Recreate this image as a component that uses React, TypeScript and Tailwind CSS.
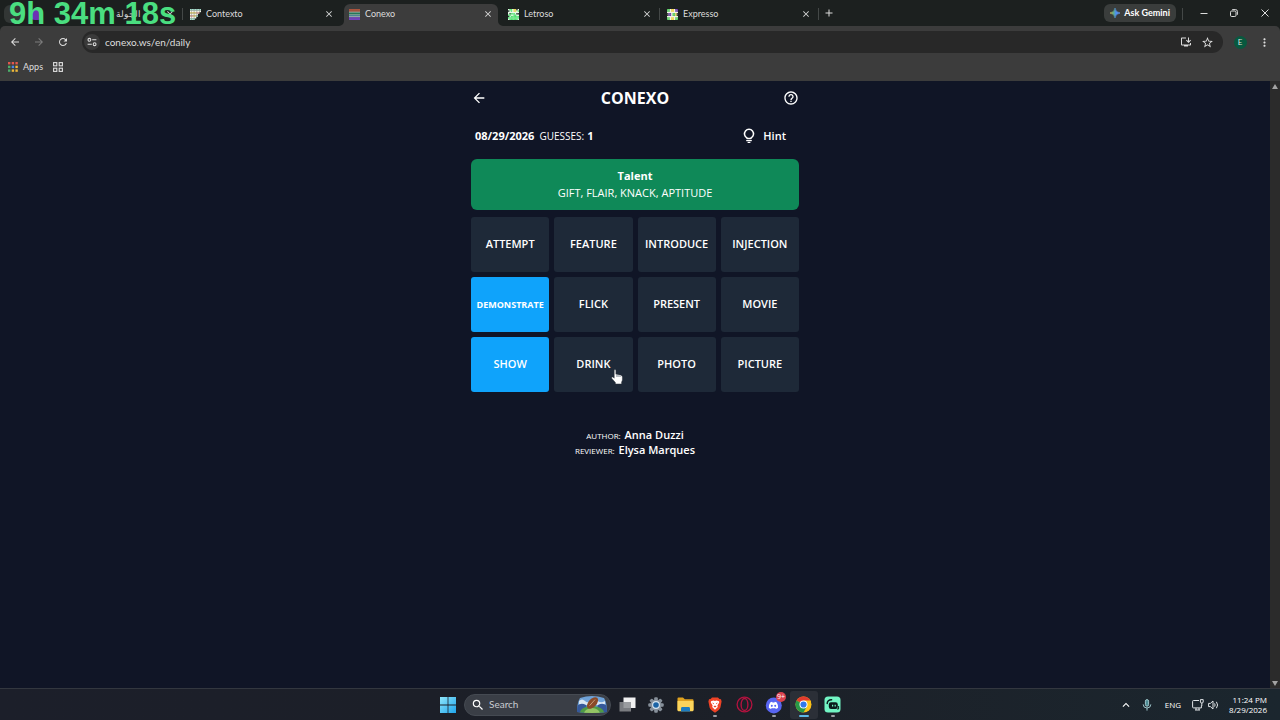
import React from 'react';
import clsx from 'clsx';
import {
  MdAdd,
  MdArrowBack,
  MdArrowForward,
  MdClose,
  MdHelpOutline,
  MdInstallDesktop,
  MdKeyboardArrowUp,
  MdMoreVert,
  MdRefresh,
  MdSearch,
  MdStarBorder,
} from 'react-icons/md';

/* ---------- favicons ---------- */

const PixelIcon: React.FC<{ rows: string[]; colors: Record<string, string>; bg?: string }> = ({ rows, colors, bg }) => (
  <svg width="11" height="11" viewBox={`0 0 ${rows[0].length} ${rows.length}`} preserveAspectRatio="none" className="shrink-0">
    {bg && <rect width="100%" height="100%" fill={bg} />}
    {rows.map((row, y) =>
      row.split('').map((c, x) =>
        colors[c] ? <rect key={`${x}-${y}`} x={x} y={y} width="1.02" height="1.02" fill={colors[c]} /> : null
      )
    )}
  </svg>
);

const ContextoIcon = () => (
  <PixelIcon
    rows={['ggggggg', 'wwwwwww', 'yyyypp.', 'wwwww..', 'ppyyg..', 'wwww...', 'ggg....']}
    colors={{ g: '#a9dfcf', w: '#f4f4ea', y: '#f3e08c', p: '#f1b7b0' }}
  />
);

const ConexoIcon = () => (
  <PixelIcon
    rows={['r', 'r', 'r', 'd', 'g', 'g', 'd', 'b', 'd', 'p', 'p', 'p']}
    colors={{ r: '#b4563f', d: '#b9cfc6', g: '#1f8a62', b: '#3489a8', p: '#7645c6' }}
  />
);

const LetrosoIcon = () => (
  <PixelIcon
    bg="#e9f9ea"
    rows={['wggwyykw', 'kwgwyywg', 'wwwwwwww', 'wkgggwkk', 'ggwwggww', 'kwgggggg', 'gggggggg', 'wggggggw']}
    colors={{ g: '#4fe070', k: '#20302a', y: '#e7d24d' }}
  />
);

const ExpressoIcon = () => (
  <PixelIcon
    bg="#f5f3e6"
    rows={['ggwyywpp', 'ggwyywpp', 'wwwwwwww', 'kppwggyk', 'kppwggyk', 'wwwwwwww', 'ggwyywgg', 'ggwyywgg']}
    colors={{ g: '#49c456', y: '#efcf3c', p: '#5b2ca0', k: '#26302c' }}
  />
);

/* ---------- browser window ---------- */

const tabs = [
  { title: 'الجولة', icon: <span className="size-[11px] shrink-0 rounded-sm bg-[#6d2fb5]" /> },
  { title: 'Contexto', icon: <ContextoIcon /> },
  { title: 'Conexo', icon: <ConexoIcon />, active: true },
  { title: 'Letroso', icon: <LetrosoIcon /> },
  { title: 'Expresso', icon: <ExpressoIcon /> },
];

const TabFlare: React.FC<{ className: string }> = ({ className }) => (
  <svg width="5" height="5" viewBox="0 0 5 5" className={clsx('absolute bottom-0', className)}>
    <path d="M5 0V5H0A5 5 0 0 0 5 0Z" fill="#3c3c3c" />
  </svg>
);

const TabStrip = () => (
  <div className="flex h-[26px] bg-[#1c201f] text-[#dcdcdc]">
    <button aria-label="Search tabs" className="mt-[5px] ml-1 mr-[3px] h-[18px] w-[18px] rounded-md bg-[#323635]" />
    {tabs.map((tab, i) => {
      const first = i === 0;
      const separated = first || i === 3 || i === 4;

      return (
        <div key={tab.title} className="relative w-[159px] pt-1 pl-px pr-1">
          <div className={clsx('relative flex h-[22px] items-center pr-[5px] pl-[5px]', tab.active && 'rounded-t-md bg-[#3c3c3c]')}>
            {tab.active && (
              <>
                <TabFlare className="-left-[5px]" />
                <TabFlare className="-right-[5px] -scale-x-100" />
              </>
            )}
            <button className={clsx('-mt-0.5 flex grow items-center gap-[5px] text-[9px]', first && 'pr-6')}>
              {tab.icon}
              <span className={clsx(first && 'grow text-right')}>{tab.title}</span>
            </button>
            <button aria-label={`Close ${tab.title}`} className="-mt-0.5">
              <MdClose size={10} />
            </button>
          </div>
          {separated && <span className="absolute top-2 right-px h-3 w-px bg-[#444847]" />}
        </div>
      );
    })}
    <button aria-label="New tab" className="ml-[3px] flex h-[26px] items-center">
      <MdAdd size={12} />
    </button>

    <button className="mt-1 ml-auto flex h-[18px] items-center gap-1 rounded-md bg-[#3a3d3c] px-[6px] text-[9px] font-bold text-white">
      <svg width="10" height="10" viewBox="0 0 10 10">
        <defs>
          <linearGradient id="gemini" x1="0" y1="0" x2="1" y2="0">
            <stop offset="0" stopColor="#e8c04b" />
            <stop offset="0.35" stopColor="#5fae8a" />
            <stop offset="0.6" stopColor="#4a8df6" />
            <stop offset="1" stopColor="#6fa6ff" />
          </linearGradient>
        </defs>
        <path d="M5 0Q5.6 4.4 10 5Q5.6 5.6 5 10Q4.4 5.6 0 5Q4.4 4.4 5 0Z" fill="url(#gemini)" stroke="url(#gemini)" strokeWidth="0.6" />
      </svg>
      Ask Gemini
    </button>
    <span className="mt-2 ml-[6px] h-3 w-px bg-[#444847]" />
    <div className="ml-[5px] flex">
      <button aria-label="Minimize" className="flex w-[31px] items-center justify-center">
        <svg width="8" height="8" viewBox="0 0 8 8" stroke="#dcdcdc"><path d="M0.5 4.5H7.5" /></svg>
      </button>
      <button aria-label="Restore" className="flex w-[30px] items-center justify-center">
        <svg width="8" height="8" viewBox="0 0 8 8" fill="none" stroke="#dcdcdc">
          <rect x="0.5" y="2" width="5.5" height="5.5" rx="1.2" />
          <path d="M2.2 0.6H5.6Q7.4 0.6 7.4 2.4V5.8" />
        </svg>
      </button>
      <button aria-label="Close" className="flex w-[31px] items-center justify-center">
        <svg width="8" height="8" viewBox="0 0 8 8" stroke="#dcdcdc"><path d="M0.5 0.5L7.5 7.5M7.5 0.5L0.5 7.5" /></svg>
      </button>
    </div>
  </div>
);

const ToolButton: React.FC<{ label: string; children: React.ReactNode; className?: string }> = ({ label, children, className }) => (
  <button aria-label={label} className={clsx('flex h-6 w-6 items-center justify-center', className)}>
    {children}
  </button>
);

const Toolbar = () => (
  <div className="flex h-8 items-center bg-[#3c3c3c] pr-1 pl-[3px] text-[#dedede]">
    <ToolButton label="Back"><MdArrowBack size={12} /></ToolButton>
    <ToolButton label="Forward" className="text-[#7c7c7c]"><MdArrowForward size={12} /></ToolButton>
    <ToolButton label="Reload"><MdRefresh size={12} /></ToolButton>
    <div className="mr-[5px] ml-[7px] flex h-[22px] grow items-center rounded-full bg-[#282828] pr-2 pl-[2px]">
      <button aria-label="Site information" className="flex size-4 items-center justify-center rounded-full bg-[#3a3a3a]">
        <svg width="10" height="10" viewBox="0 0 10 10" fill="none" stroke="#dedede" strokeWidth="1.1">
          <circle cx="2.4" cy="2.8" r="1.4" />
          <path d="M5.2 2.8H9.4M0.6 7.2H4.8" />
          <circle cx="7.6" cy="7.2" r="1.4" />
        </svg>
      </button>
      <input
        aria-label="Address"
        defaultValue="conexo.ws/en/daily"
        className="ml-[5px] min-w-0 grow bg-transparent text-[10px] text-[#dedede] outline-none"
      />
      <div className="flex gap-[5px]">
        <button aria-label="Install app" className="flex size-4 items-center justify-center"><MdInstallDesktop size={12} /></button>
        <button aria-label="Bookmark" className="flex size-4 items-center justify-center"><MdStarBorder size={13} /></button>
      </div>
    </div>
    <ToolButton label="Profile">
      <span className="flex size-[13px] items-center justify-center rounded-full bg-[#08593f] text-[8px] leading-none">E</span>
    </ToolButton>
    <ToolButton label="Menu"><MdMoreVert size={13} /></ToolButton>
  </div>
);

const appColors = ['#e2574c', '#e2574c', '#e2574c', '#4caf6a', '#4a86e8', '#f0b93a', '#4caf6a', '#f0b93a', '#f0b93a'];

const BookmarkBar = () => (
  <div className="flex h-[23px] items-center gap-[10px] bg-[#3c3c3c] px-2 pb-[6px] text-[9px] text-[#dedede]">
    <a href="#apps" className="flex items-center gap-[5px]">
      <svg width="10" height="10" viewBox="0 0 10 10">
        {appColors.map((c, i) => (
          <rect key={i} x={(i % 3) * 3.7} y={Math.floor(i / 3) * 3.7} width="2.4" height="2.4" fill={c} />
        ))}
      </svg>
      Apps
    </a>
    <button aria-label="Tab groups">
      <svg width="10" height="10" viewBox="0 0 10 10" fill="none" stroke="#dedede" strokeWidth="1.1">
        <rect x="0.6" y="0.6" width="3.2" height="3.2" />
        <rect x="6.2" y="0.6" width="3.2" height="3.2" />
        <rect x="0.6" y="6.2" width="3.2" height="3.2" />
        <rect x="6.2" y="6.2" width="3.2" height="3.2" />
      </svg>
    </button>
  </div>
);

/* ---------- game ---------- */

const words = [
  'ATTEMPT', 'FEATURE', 'INTRODUCE', 'INJECTION',
  'DEMONSTRATE', 'FLICK', 'PRESENT', 'MOVIE',
  'SHOW', 'DRINK', 'PHOTO', 'PICTURE',
];
const selected = ['DEMONSTRATE', 'SHOW'];
const hovered = 'DRINK';

const HandCursor = () => (
  <svg width="12" height="16" viewBox="0 0 12 16" className="pointer-events-none absolute top-8 left-[57px]">
    <path
      d="M3.2 1.4Q3.2 0.5 4 0.5T4.9 1.4V5.2L10 6.2Q11.4 6.6 11.4 8V10.6Q11.4 12 10.6 13V15H4.4V13.6L0.8 9.4Q0.3 8.4 1.2 8Q1.9 7.8 2.5 8.5L3.2 9.2Z"
      fill="#fff"
      stroke="#2b3038"
      strokeWidth="0.5"
    />
    <path d="M5 5.4L10 6.4V8H5Z" fill="#b9bec4" />
  </svg>
);

const Game = () => (
  <main className="mx-auto w-[328px] text-white">
    <header className="flex h-[34px] items-center justify-between">
      <button aria-label="Back to home"><MdArrowBack size={16} /></button>
      <h1 className="text-[16px] font-bold">CONEXO</h1>
      <button aria-label="How to play"><MdHelpOutline size={16} /></button>
    </header>

    <div className="mt-[6px] flex h-[30px] items-center pr-[13px] pl-1 text-[11px]">
      <span className="font-bold">08/29/2026</span>
      <span className="ml-[5px] text-[10px]">GUESSES:</span>
      <span className="ml-[3px] font-bold">1</span>
      <button className="ml-auto flex items-center gap-[7px] font-semibold">
        <svg width="14" height="16" viewBox="0 0 14 16" fill="none" stroke="#fff" strokeWidth="1.5">
          <path d="M5 10.6V9.9A4.5 4.5 0 1 1 9 9.9V10.6Z" strokeLinejoin="round" />
          <path d="M4.2 12.6H9.8" strokeWidth="1.2" />
          <path d="M5.6 14.4H8.4" strokeWidth="1.2" />
        </svg>
        Hint
      </button>
    </div>

    <section className="mt-2 rounded-md bg-[#0f8958] pt-2 pb-[9px] text-center text-[11px] leading-[17px]">
      <h2 className="font-bold">Talent</h2>
      <p>GIFT, FLAIR, KNACK, APTITUDE</p>
    </section>

    <div className="mt-[7px] grid grid-cols-4 gap-[5px]">
      {words.map((word) => (
        <button
          key={word}
          aria-pressed={selected.includes(word)}
          className={clsx(
            'relative h-[55px] rounded-[3px]',
            selected.includes(word) ? 'bg-[#0fa3fb]' : 'bg-[#1e2938]',
            word.length > 10 ? 'text-[9px] font-bold' : 'text-[11px] font-semibold'
          )}
        >
          {word}
          {word === hovered && <HandCursor />}
        </button>
      ))}
    </div>

    <footer className="mt-[35px] text-center text-[11px] leading-[15px] font-semibold">
      <p><span className="mr-px text-[8px] leading-none font-medium">AUTHOR:</span> Anna Duzzi</p>
      <p><span className="mr-px text-[8px] leading-none font-medium">REVIEWER:</span> Elysa Marques</p>
    </footer>
  </main>
);

const ScrollBar = () => (
  <div className="flex w-[10px] flex-col items-center justify-between bg-[#2b2b2b] pt-[3px] pb-[2px]">
    <svg width="6" height="5" viewBox="0 0 6 5"><path d="M3 0L6 5H0Z" fill="#a3a3a3" /></svg>
    <svg width="6" height="5" viewBox="0 0 6 5"><path d="M3 5L6 0H0Z" fill="#a3a3a3" /></svg>
  </div>
);

/* ---------- taskbar ---------- */

const TaskViewIcon = () => (
  <svg width="17" height="15" viewBox="0 0 17 15">
    <rect x="4.5" y="0.5" width="12" height="10.5" fill="#f1f1f1" />
    <rect x="0.5" y="5" width="11.5" height="9.5" fill="#8b8d90" fillOpacity="0.85" />
  </svg>
);

const SettingsIcon = () => (
  <svg width="16" height="16" viewBox="0 0 16 16">
    {[0, 45, 90, 135].map((a) => (
      <rect key={a} x="6.2" y="0.3" width="3.6" height="15.4" rx="1" fill="#87909a" transform={`rotate(${a} 8 8)`} />
    ))}
    <circle cx="8" cy="8" r="5.6" fill="#87909a" />
    <circle cx="8" cy="8" r="3.9" fill="#d7e6f2" />
    <circle cx="8" cy="8" r="2.8" fill="#1b63a5" />
  </svg>
);

const FolderIcon = () => (
  <svg width="17" height="15" viewBox="0 0 17 15">
    <path d="M0.5 1.5Q0.5 0.5 1.5 0.5H6L7.8 2.3H15.5Q16.5 2.3 16.5 3.3V13H0.5Z" fill="#e0a21f" />
    <path d="M0.5 4H16.5V13.3Q16.5 14.3 15.5 14.3H1.5Q0.5 14.3 0.5 13.3Z" fill="#fbd45c" />
    <path d="M4 14.5V11.4Q4 10 5.4 10H11.6Q13 10 13 11.4V14.5Z" fill="#1d7cc0" />
  </svg>
);

const BraveIcon = () => (
  <svg width="14" height="16" viewBox="0 0 14 16">
    <path d="M4 0.5H10L11.4 2L13 2.2L13.6 4.6L12.4 10.6Q12 12 10.8 12.9L7 15.7L3.2 12.9Q2 12 1.6 10.6L0.4 4.6L1 2.2L2.6 2Z" fill="#ee4326" />
    <path d="M3 4.2L5.6 3.6L7 4L8.4 3.6L11 4.2L11.2 5.6L9.4 8.4L9.8 10L7 12.8L4.2 10L4.6 8.4L2.8 5.6Z" fill="#fff" />
    <path d="M4 5.6L6 6.2L5.6 7.2ZM10 5.6L8 6.2L8.4 7.2ZM5.4 9.4L7 8.6L8.6 9.4L7 10.4Z" fill="#ee4326" />
  </svg>
);

const OperaIcon = () => (
  <svg width="17" height="17" viewBox="0 0 17 17" fill="none" stroke="#b3123f">
    <circle cx="8.5" cy="8.5" r="7.4" strokeWidth="1.3" />
    <ellipse cx="8.5" cy="8.5" rx="3.4" ry="6" strokeWidth="1.4" />
  </svg>
);

const DiscordIcon = () => (
  <svg width="18" height="18" viewBox="0 0 18 18" className="overflow-visible">
    <circle cx="8.8" cy="9.4" r="8" fill="#5865f2" />
    <path
      d="M5.2 6.4Q6.2 5.9 7.1 5.8L7.5 6.5H9.4L9.8 5.8Q10.8 5.9 11.7 6.4Q13.3 8.8 13.1 11.7Q12.1 12.6 10.8 12.9L10.2 12Q8.5 12.5 6.7 12L6.1 12.9Q4.8 12.6 3.8 11.7Q3.6 8.8 5.2 6.4Z"
      fill="#fff"
    />
    <ellipse cx="6.8" cy="9.8" rx="1" ry="1.1" fill="#5865f2" />
    <ellipse cx="10.2" cy="9.8" rx="1" ry="1.1" fill="#5865f2" />
  </svg>
);

const ChromeIcon = () => (
  <svg width="17" height="17" viewBox="0 0 17 17">
    <circle cx="8.5" cy="8.5" r="8" fill="#fbc116" />
    <path d="M8.5 8.5L1.57 4.5A8 8 0 0 1 15.43 4.5Z" fill="#e33b2e" />
    <path d="M8.5 4.5H15.4Q16 5 16 6H8.5Z" fill="#fbc116" />
    <path d="M1.57 4.5A8 8 0 0 0 8.5 16.5L11.9 10.6L8.5 8.5Z" fill="#279847" />
    <circle cx="8.5" cy="8.5" r="4" fill="#fff" />
    <circle cx="8.5" cy="8.5" r="3.1" fill="#2f78ea" />
  </svg>
);

const StreamlabsIcon = () => (
  <svg width="17" height="17" viewBox="0 0 17 17" fill="none">
    <rect x="0.5" y="0.5" width="16" height="16" rx="3.5" fill="#72f5c4" />
    <path d="M3.2 7.6Q3.2 3.8 7.6 3.8" stroke="#0b1b1c" strokeWidth="1.5" strokeLinecap="round" />
    <rect x="4.8" y="6.2" width="9" height="6.8" rx="2.2" fill="#0b1b1c" />
    <path d="M8.6 8.8V10.4M11.2 8.8V10.4" stroke="#72f5c4" strokeWidth="1.2" />
    <path d="M13 13H14.6V10" stroke="#0b1b1c" />
  </svg>
);

const apps = [
  { name: 'Task view', icon: <TaskViewIcon /> },
  { name: 'Settings', icon: <SettingsIcon /> },
  { name: 'File Explorer', icon: <FolderIcon /> },
  { name: 'Brave', icon: <BraveIcon />, running: true },
  { name: 'Opera GX', icon: <OperaIcon /> },
  { name: 'Discord', icon: <DiscordIcon />, running: true, badge: '9+' },
  { name: 'Chrome', icon: <ChromeIcon />, running: true, focused: true },
  { name: 'Streamlabs', icon: <StreamlabsIcon />, running: true },
];

const SearchPicture = () => (
  <svg width="30" height="17" viewBox="0 0 30 17" className="shrink-0">
    <clipPath id="hill"><path d="M3 2Q15 -2 27 2Q30 7 30 16Q15 18 0 16Q0 7 3 2Z" /></clipPath>
    <g clipPath="url(#hill)">
      <rect width="30" height="17" fill="#6fa2d8" />
      <path d="M2 5Q5 2 8 5T14 4T20 4T28 5V9H2Z" fill="#d9e7f3" />
      <path d="M0 10Q4 6 9 9L12 17H0ZM30 10Q26 6 21 9L18 17H30Z" fill="#35589a" />
      <ellipse cx="15" cy="17" rx="12" ry="7" fill="#4f9a45" />
      <ellipse cx="15" cy="18" rx="8" ry="6" fill="#95c565" />
    </g>
    <ellipse cx="15.5" cy="7" rx="7" ry="4" fill="#8a4a28" transform="rotate(-48 15.5 7)" />
    <path d="M12.6 9.6L18 3.6" stroke="#d9b08c" strokeWidth="0.8" />
  </svg>
);

const Taskbar = () => (
  <footer className="grid h-8 grid-cols-[1fr_auto_1fr] items-center border-t border-[#33373f] bg-linear-to-r from-[#1c1f2a] via-[#1c1f27] to-[#1b262e] text-white">
    <div />
    <div className="flex h-full items-center">
      <button aria-label="Start" className="mr-[2px] flex w-[29px] justify-center">
        <svg width="16" height="16" viewBox="0 0 16 16">
          <defs>
            <linearGradient id="win" x1="0" y1="0" x2="1" y2="1">
              <stop offset="0" stopColor="#8fe6fb" />
              <stop offset="1" stopColor="#1fa5ec" />
            </linearGradient>
          </defs>
          <path d="M0 0H7.6V7.6H0ZM8.4 0H16V7.6H8.4ZM0 8.4H7.6V16H0ZM8.4 8.4H16V16H8.4Z" fill="url(#win)" />
        </svg>
      </button>
      <label className="mr-[2px] flex h-[22px] w-[147px] items-center rounded-full border border-[#454a52] bg-[#3a3e46] pr-[3px] pl-[6px]">
        <MdSearch size={14} className="shrink-0" />
        <input
          aria-label="Search"
          placeholder="Search"
          className="ml-1 min-w-0 grow bg-transparent font-['Lato',sans-serif] text-[10px] outline-none placeholder:text-[#c9ccd1]"
        />
        <SearchPicture />
      </label>
      <div className="flex h-full w-[234px] items-center justify-between">
        {apps.map((app) => (
          <button
            key={app.name}
            aria-label={app.name}
            className={clsx('relative flex h-7 w-7 items-center justify-center rounded-[3px]', app.focused && 'bg-[#2b2f37]')}
          >
            {app.icon}
            {app.badge && (
              <span className="absolute top-px right-[2px] flex h-[10px] w-[10px] items-center justify-center rounded-full bg-[#d9414e] text-[7px] leading-none">
                {app.badge}
              </span>
            )}
            {app.running && (
              <span
                className={clsx(
                  'absolute bottom-[2px] left-1/2 h-[2px] -translate-x-1/2 rounded-full',
                  app.focused ? 'w-[10px] bg-[#5cb8e6]' : 'w-1 bg-[#9a9da3]'
                )}
              />
            )}
          </button>
        ))}
      </div>
    </div>
    <div className="flex items-center justify-end pr-[13px] text-[8px]">
      <button aria-label="Show hidden icons" className="mr-[9px]"><MdKeyboardArrowUp size={14} /></button>
      <button aria-label="Microphone" className="mr-[13px]">
        <svg width="10" height="12" viewBox="0 0 10 12" fill="none" stroke="#9fc6cb">
          <rect x="3.4" y="0.6" width="3.2" height="6.6" rx="1.6" fill="#4d8b94" />
          <path d="M1.2 5.4Q1.2 9 5 9T8.8 5.4M5 9V11.6" />
        </svg>
      </button>
      <button className="mr-[11px]">ENG</button>
      <button aria-label="Network and volume" className="mr-[10px] flex items-center gap-1">
        <svg width="12" height="12" viewBox="0 0 12 12" fill="none" stroke="#dfe3e6">
          <path d="M7 1.5H1.5Q0.6 1.5 0.6 2.4V8Q0.6 8.9 1.5 8.9H9.4V6.4M3 11H8M4 9V11M7 9V11" />
          <path d="M8.4 0.6V3Q8.4 4 9.8 4T11.2 3V0.6ZM9.8 4V7" />
        </svg>
        <svg width="11" height="10" viewBox="0 0 11 10" fill="none" stroke="#dfe3e6">
          <path d="M0.6 3.4H2.4L5 1V9L2.4 6.6H0.6Z" strokeLinejoin="round" />
          <path d="M6.6 3.4Q7.6 5 6.6 6.6M8.4 1.8Q10.8 5 8.4 8.2" />
        </svg>
      </button>
      <time className="text-right leading-[10px]">11:24 PM<br />8/29/2026</time>
    </div>
  </footer>
);

export default function App() {
  return (
    <div className="relative flex min-h-screen flex-col bg-[#101526] font-['Open_Sans',sans-serif]">
      <div className="bg-[#1c201f] font-['Lato','Noto_Sans',sans-serif]">
        <TabStrip />
        {/* rounded top corners of the toolbar sit on the dark strip */}
        <div className="overflow-hidden rounded-t-[5px]">
          <Toolbar />
          <BookmarkBar />
        </div>
      </div>
      <div className="flex grow">
        <div className="grow">
          <Game />
        </div>
        <ScrollBar />
      </div>
      <Taskbar />

      {/* stream timer overlay */}
      <div className="pointer-events-none absolute top-0 left-[9px] font-['Liberation_Sans',sans-serif] text-[31px] leading-7 font-bold whitespace-nowrap text-[#4ade80]">
        9h 34m 18s
      </div>
    </div>
  );
}
